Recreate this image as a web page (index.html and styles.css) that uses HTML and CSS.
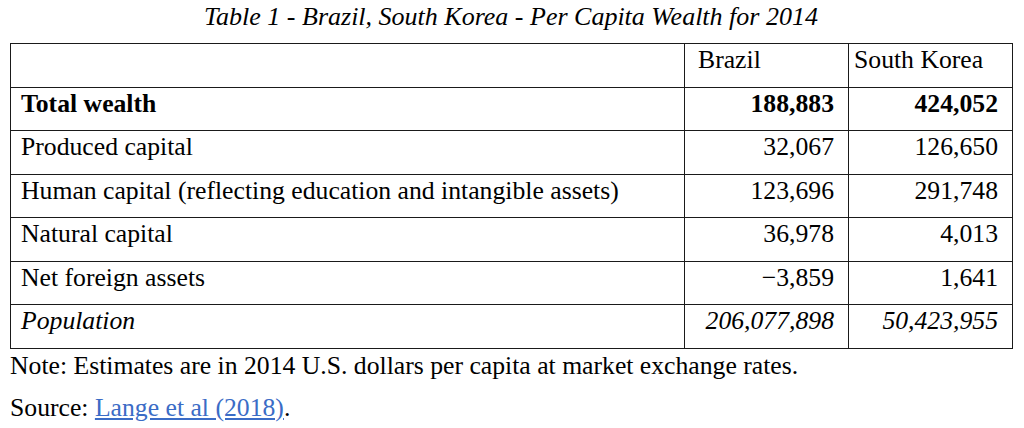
FILE: index.html
```html
<!DOCTYPE html>
<html lang="en">
<head>
<meta charset="utf-8">
<title>Table 1</title>
<link rel="stylesheet" href="styles.css">
</head>
<body>
<div class="page">
  <p class="caption">Table 1 - Brazil, South Korea - Per Capita Wealth for 2014</p>
  <table class="wealth">
    <colgroup>
      <col class="c-label">
      <col class="c-num">
      <col class="c-num">
    </colgroup>
    <tr>
      <td></td>
      <td class="head head-br">Brazil</td>
      <td class="head head-sk">South Korea</td>
    </tr>
    <tr class="bold">
      <td>Total wealth</td>
      <td class="num">188,883</td>
      <td class="num">424,052</td>
    </tr>
    <tr>
      <td>Produced capital</td>
      <td class="num">32,067</td>
      <td class="num">126,650</td>
    </tr>
    <tr>
      <td>Human capital (reflecting education and intangible assets)</td>
      <td class="num">123,696</td>
      <td class="num">291,748</td>
    </tr>
    <tr>
      <td>Natural capital</td>
      <td class="num">36,978</td>
      <td class="num">4,013</td>
    </tr>
    <tr>
      <td>Net foreign assets</td>
      <td class="num">&minus;3,859</td>
      <td class="num">1,641</td>
    </tr>
    <tr class="ital">
      <td>Population</td>
      <td class="num">206,077,898</td>
      <td class="num">50,423,955</td>
    </tr>
  </table>
  <p class="note">Note: Estimates are in 2014 U.S. dollars per capita at market exchange rates.</p>
  <p class="source">Source: <a href="#">Lange et al (2018)</a>.</p>
</div>
</body>
</html>
```
FILE: styles.css
```css
html, body {
  margin: 0;
  padding: 0;
  background: #fff;
}
body {
  font-family: "Liberation Serif", "Times New Roman", serif;
  font-size: 25.7px;
  color: #000;
}
.page {
  width: 1002px;
  padding-left: 10px;
}
.caption {
  margin: 0;
  height: 43px;
  padding-top: 3px;
  box-sizing: border-box;
  line-height: 28px;
  font-size: 26px;
  font-style: italic;
  text-align: center;
}
.wealth {
  width: 1002px;
  border-collapse: collapse;
  table-layout: fixed;
}
.c-label { width: 674px; }
.c-num { width: 164px; }
.wealth td {
  border: 1px solid #1a1a1a;
  line-height: 28px;
  padding: 2px 14px 12.5px 10px;
  white-space: nowrap;
}
.wealth .num { text-align: right; }
.wealth .head-br { padding-left: 13px; }
.wealth .head-sk { padding-left: 5px; }
.bold td { font-weight: bold; }
.ital td { font-style: italic; }
.note {
  margin: 0;
  padding-top: 3px;
  line-height: 28px;
}
.source {
  margin: 0;
  padding-top: 14px;
  line-height: 28px;
}
.source a {
  color: #3b6cc6;
  text-decoration: underline;
}
```
